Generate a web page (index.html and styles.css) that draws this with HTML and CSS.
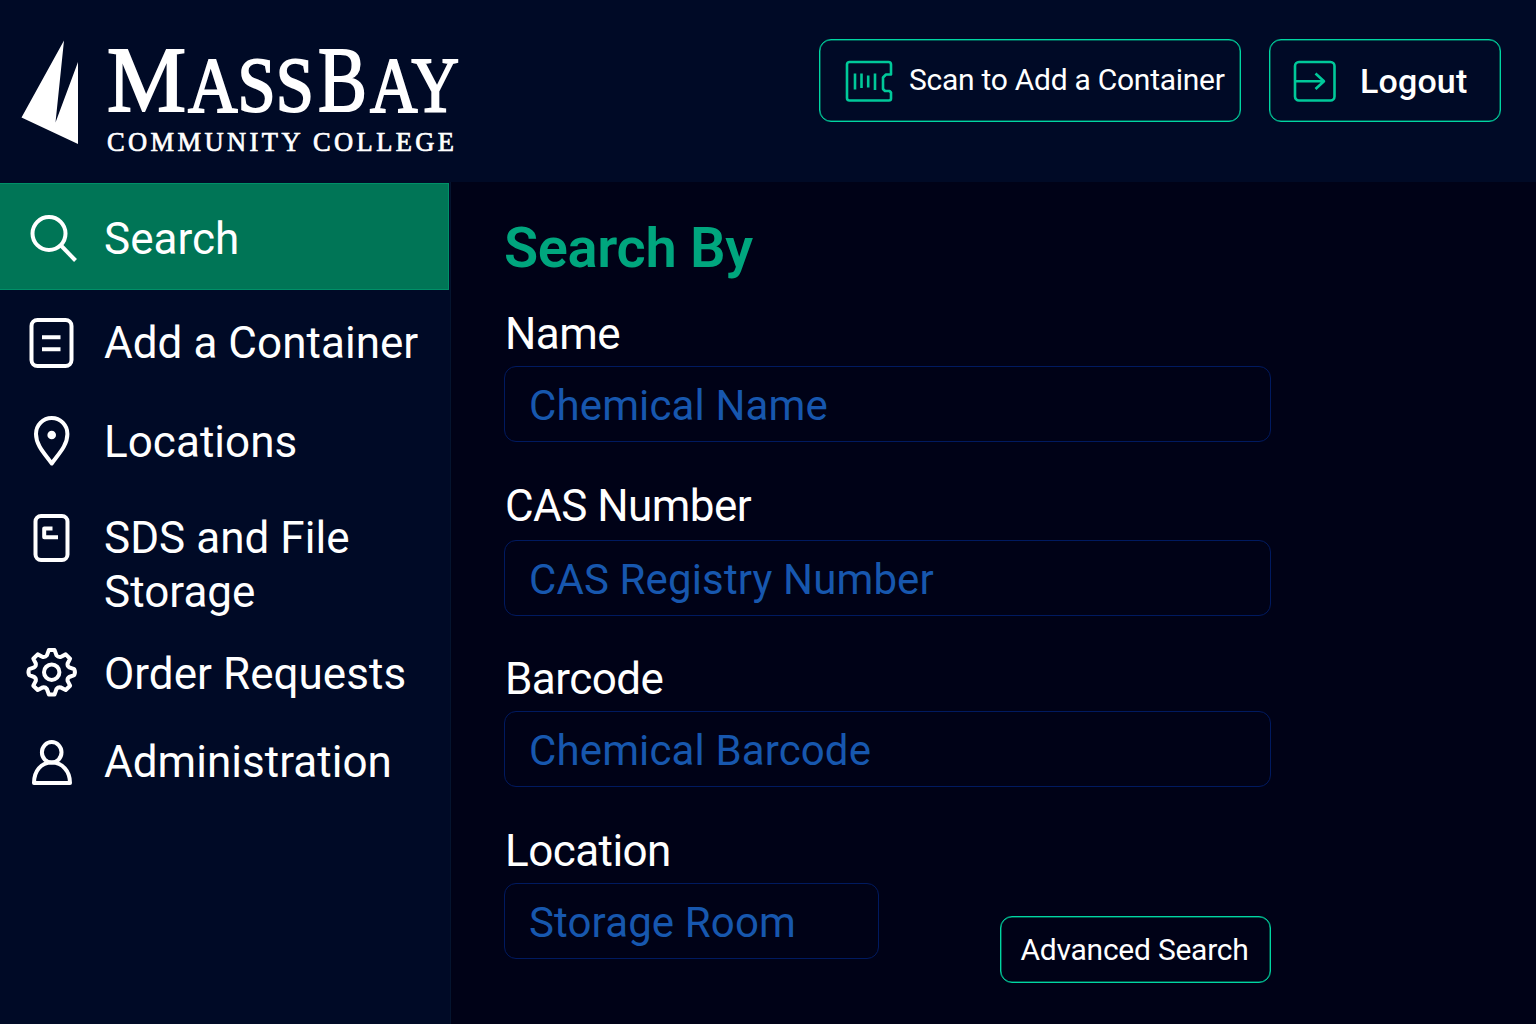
FILE: index.html
```html
<!DOCTYPE html>
<html lang="en">
<head>
<meta charset="utf-8">
<title>MassBay Chemical Inventory</title>
<link rel="stylesheet" href="styles.css">
</head>
<body>
<div class="app">
  <header class="header">
    <svg class="logo" width="470" height="160" viewBox="10 10 470 160" role="img" aria-label="MassBay Community College">
      <path class="logo-sail" d="M64 40.500 L21.500 117.500 L78 144 V62 L55.500 122.500 Z"/>
      <g class="logo-name">
        <text x="107" y="111" font-size="94" textLength="79" lengthAdjust="spacingAndGlyphs">M</text>
        <text x="188" y="111" font-size="79" textLength="126" lengthAdjust="spacingAndGlyphs">ASS</text>
        <text x="318" y="111" font-size="94" textLength="49" lengthAdjust="spacingAndGlyphs">B</text>
        <text x="370" y="111" font-size="79" textLength="89" lengthAdjust="spacingAndGlyphs">AY</text>
      </g>
      <text class="logo-sub" x="107" y="150.500" font-size="26.500" textLength="347">COMMUNITY COLLEGE</text>
    </svg>
    <div class="actions">
      <button class="btn btn-scan">
        <svg width="48" height="44" viewBox="0 0 48 44"><path class="ln2" d="M4.500 3 H43.500 a2.500 2.500 0 0 1 2.500 2.500 V15.500 H41 L38 18.500 V30 L40 32 H44.500 L46 33.500 V39.500 a2 2 0 0 1 -2 2 H4.500 a2.500 2.500 0 0 1 -2.500 -2.500 V5.500 a2.500 2.500 0 0 1 2.500 -2.500 Z"/><path class="ln2" d="M10 14.500 V30.500 M16.500 14.500 V29 M23.200 16.500 V28.500 M30 14.500 V31"/></svg>
        <span class="scan-text">Scan to Add a Container</span>
      </button>
      <button class="btn btn-logout">
        <svg width="44" height="44" viewBox="0 0 44 44"><path class="ln2" d="M6 3 H37.500 a4 4 0 0 1 4 4 V37.500 a4 4 0 0 1 -4 4 H6 a4 4 0 0 1 -4 -4 V7 a4 4 0 0 1 4 -4 Z M2 22.200 H31 M22.500 14.500 L31 22.200 L22.500 30"/></svg>
        <span class="logout-text">Logout</span>
      </button>
    </div>
  </header>
  <div class="body">
    <nav class="nav">
      <a class="item item-search">
        <svg class="icon" viewBox="0 0 54 54"><circle cx="24" cy="23.500" r="16.500"/><path d="M35.500 35 L50.500 50.500"/></svg>
        <span class="t-search">Search</span>
      </a>
      <a class="item item-add">
        <svg class="icon" viewBox="0 0 54 54"><rect x="6.500" y="4" width="40" height="46" rx="6"/><path d="M17 21.200 H35.500 M17 33.200 H35.500"/></svg>
        <span>Add a Container</span>
      </a>
      <a class="item item-loc">
        <svg class="icon" viewBox="0 0 54 54"><path d="M26.700 48.500 C21 40 11 31 11 19 a15.700 16 0 0 1 31.400 0 C42.400 31 32.500 40 26.700 48.500 Z"/><circle class="fill" cx="26.700" cy="20" r="4.300"/></svg>
        <span>Locations</span>
      </a>
      <a class="item item-sds">
        <svg class="icon" viewBox="0 0 54 54"><rect x="10.500" y="5" width="32" height="44" rx="5.500"/><path d="M27.500 17.500 H19.200 V26.300 H33"/></svg>
        <span>SDS and File<br>Storage</span>
      </a>
      <a class="item item-order">
        <svg class="icon" viewBox="0 0 54 54"><g transform="translate(26.700 25.200)"><circle r="7.700"/><path d="M-2.800 -22.300 H2.800 L4.800 -16.800 Q6.300 -14.800 8.900 -15.200 L14 -17.800 L18.400 -13.500 L15.900 -8.700 Q15.400 -6.200 17.500 -4.800 L22.500 -3 Q24 0 22.500 3 L17.500 4.800 Q15.400 6.200 15.900 8.700 L18.400 13.500 L14 17.800 L8.900 15.200 Q6.300 14.800 4.800 16.800 L2.800 22.300 H-2.800 L-4.800 16.800 Q-6.300 14.800 -8.900 15.200 L-14 17.800 L-18.400 13.500 L-15.900 8.700 Q-15.400 6.200 -17.500 4.800 L-22.500 3 Q-24 0 -22.500 -3 L-17.500 -4.800 Q-15.400 -6.200 -15.900 -8.700 L-18.400 -13.500 L-14 -17.800 L-8.900 -15.200 Q-6.300 -14.800 -4.800 -16.800 Z"/></g></svg>
        <span>Order Requests</span>
      </a>
      <a class="item item-admin">
        <svg class="icon" viewBox="0 0 54 54"><ellipse cx="26.700" cy="17.300" rx="9.800" ry="10.300"/><path d="M9 48 C9 36 16 27.600 26.700 27.600 S45 36 45 48 Z"/></svg>
        <span>Administration</span>
      </a>
    </nav>
    <main class="main">
      <h1 class="title">Search By</h1>
      <label class="field"><span class="label">Name</span><input class="input" placeholder="Chemical Name"></label>
      <label class="field field-cas"><span class="label">CAS Number</span><input class="input" placeholder="CAS Registry Number"></label>
      <label class="field"><span class="label">Barcode</span><input class="input" placeholder="Chemical Barcode"></label>
      <div class="last">
        <label class="field"><span class="label">Location</span><input class="input input-room" placeholder="Storage Room"></label>
        <button class="btn btn-adv"><span class="adv-text">Advanced Search</span></button>
      </div>
    </main>
  </div>
</div>
</body>
</html>
```
FILE: styles.css
```css
* { box-sizing: border-box; }
body { margin: 0; background: #000217; color: #fff; font-family: Roboto, sans-serif; }
.app { width: 1536px; height: 1024px; display: flex; flex-direction: column; overflow: hidden; }

.header { height: 182px; flex: none; background: #000a26; display: flex; justify-content: space-between; align-items: flex-start; padding: 10px 35px 0 10px; }
.logo { display: block; }
.logo-sail { fill: #fff; }
.logo-name, .logo-sub { fill: #fff; stroke: #fff; font-family: "Liberation Serif", serif; }
.logo-name { stroke-width: 2px; }
.logo-sub { stroke-width: 0.7px; }

.actions { display: flex; gap: 28px; padding-top: 29px; }
.btn { display: flex; align-items: center; margin: 0; border: 1px solid #00d6a2; box-shadow: inset 0 0 0 0.5px #00a880; border-radius: 12px; background: transparent; color: #fff; font-family: inherit; white-space: nowrap; }
.btn-scan { width: 422px; height: 83px; padding: 0 0 0 25px; font-size: 30px; letter-spacing: -0.27px; gap: 15px; }
.btn-logout { width: 232px; height: 83px; padding: 0 0 0 23px; font-size: 34px; font-weight: 500; letter-spacing: 0.15px; gap: 23px; }
.scan-text { padding: 0 0 2px 1px; }
.ln2 { fill: none; stroke: #00c99a; stroke-width: 2.6; stroke-linecap: butt; stroke-linejoin: round; }

.body { flex: 1; display: flex; }
.nav { width: 451px; background: #000a26; border-right: 1px solid #04142f; padding-top: 1px; font-size: 44px; line-height: 54px; letter-spacing: 0.04px; }
.item { display: flex; align-items: center; gap: 25px; padding-left: 25px; white-space: nowrap; }
.icon { width: 54px; height: 54px; flex: none; fill: none; stroke: #fff; stroke-width: 4; stroke-linejoin: round; }
.icon .fill { fill: #fff; stroke: none; }
.item-search { height: 107px; width: 449px; background: #007556; border: 1px solid #009068; border-left: 0; }
.t-search { padding-top: 4px; }
.item-add { height: 105px; }
.item-loc { height: 94px; }
.item-sds { height: 154px; align-items: flex-start; padding-top: 22px; }
.item-order { height: 62px; }
.item-admin { height: 114px; }

.main { flex: 1; padding: 30px 0 0 53px; }
.title { margin: 0; height: 94px; font-size: 56px; line-height: 72px; font-weight: 600; letter-spacing: -0.35px; color: #00a67e; }
.field { display: block; height: 172px; }
.field-cas { height: 173px; }
.label { display: block; height: 60px; padding-left: 1px; line-height: 56px; font-size: 44px; letter-spacing: -0.55px; }
.field-cas .label { height: 62px; }
.input { display: block; width: 767px; height: 76px; margin: 0; padding: 2px 0 0 24px; border: 1px solid #001a60; border-radius: 12px; background: transparent; color: #fff; font-family: inherit; font-size: 42px; letter-spacing: 0.13px; outline: none; }
.input::placeholder { color: #1757ae; opacity: 1; }
.last { display: flex; width: 767px; justify-content: space-between; align-items: flex-start; }
.input-room { width: 375px; }
.btn-adv { width: 271px; height: 67px; margin-top: 93px; justify-content: center; padding: 0 2px 0 0; font-size: 30px; letter-spacing: -0.25px; }
```
